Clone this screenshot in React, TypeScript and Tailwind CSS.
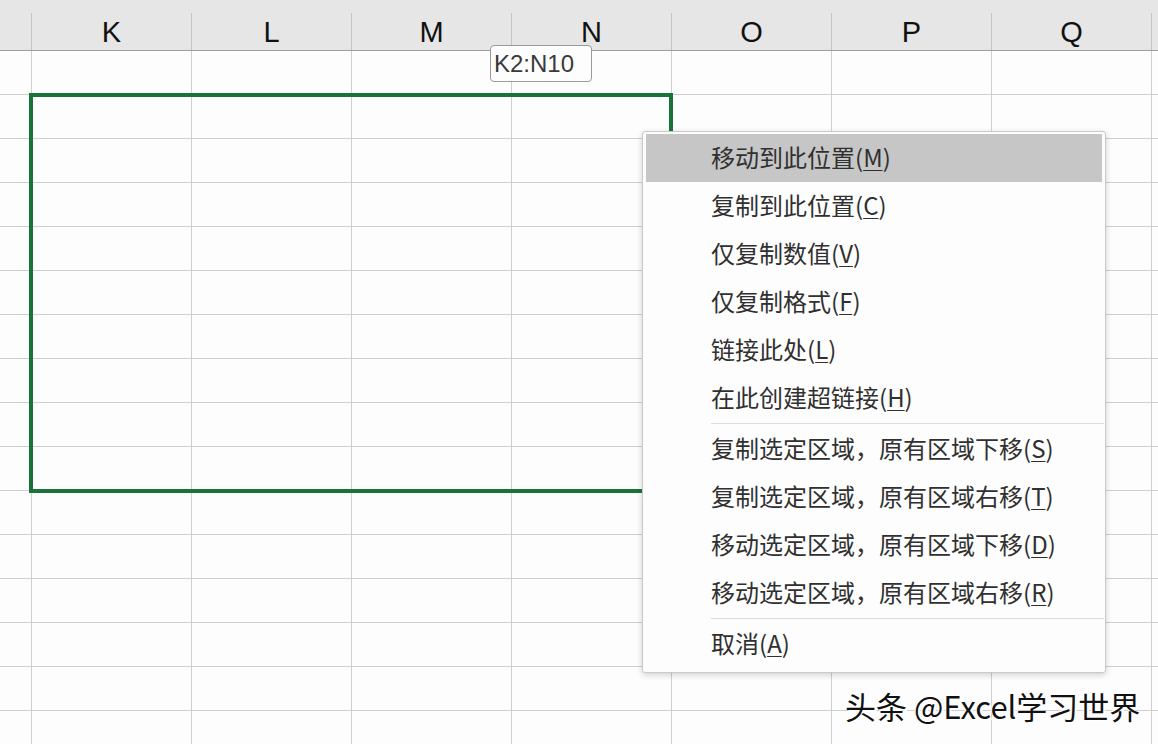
import React from "react";

const columns = ["K", "L", "M", "N", "O", "P", "Q", ""];
const rowCount = 16;

type MenuItem = { label: string; key: string; active?: boolean };

const menuGroups: MenuItem[][] = [
    [
        { label: "移动到此位置", key: "M", active: true },
        { label: "复制到此位置", key: "C" },
        { label: "仅复制数值", key: "V" },
        { label: "仅复制格式", key: "F" },
        { label: "链接此处", key: "L" },
        { label: "在此创建超链接", key: "H" },
    ],
    [
        { label: "复制选定区域，原有区域下移", key: "S" },
        { label: "复制选定区域，原有区域右移", key: "T" },
        { label: "移动选定区域，原有区域下移", key: "D" },
        { label: "移动选定区域，原有区域右移", key: "R" },
    ],
    [{ label: "取消", key: "A" }],
];

function HeaderRow() {
    return (
        <div className="flex h-[51px] shrink-0 bg-[#e6e6e6] border-b border-[#9e9e9e] pt-[13px]">
            <div className="w-[31px] shrink-0" />
            { columns.map((col, i) => (
                <div
                    key={ i }
                    className="w-[160px] shrink-0 border-l border-[#c4c4c4] flex items-center justify-center pt-[2px] text-[29px] leading-none text-[#111]"
                >
                    { col }
                </div>
            )) }
        </div>
    );
}

function BodyRow() {
    return (
        <div className="flex h-[44px] shrink-0 border-b border-[#cfcfcf]">
            <div className="w-[31px] shrink-0" />
            { columns.map((_, i) => (
                <div key={ i } className="w-[160px] shrink-0 border-l border-[#cfcfcf]" />
            )) }
        </div>
    );
}

function MenuRow({ item }: { item: MenuItem }) {
    return (
        <div
            className={ `h-[48px] flex items-center pl-[65px] pb-[3px] text-[24px] text-[#303030] ${item.active ? "bg-[#c6c6c6]" : ""}` }
        >
            <span>{ item.label }</span>
            <span>
                (<span className="underline underline-offset-[3px] decoration-1">{ item.key }</span>)
            </span>
        </div>
    );
}

function ContextMenu() {
    return (
        <div className="absolute left-[642px] top-[131px] w-[464px] h-[542px] bg-[#fdfdfd] border border-[#c9c9c9] rounded-[3px] shadow-[0_2px_6px_rgba(0,0,0,0.18)] px-[3px] pt-[2px] font-['Noto_Sans_CJK_SC',sans-serif]">
            { menuGroups.map((group, gi) => (
                <div key={ gi }>
                    { gi > 0 && (
                        <div className="h-[3px] flex items-center">
                            <div className="ml-[65px] mr-[-2px] flex-1 h-px bg-[#dcdcdc]" />
                        </div>
                    ) }
                    { group.map((item) => (
                        <MenuRow key={ item.key } item={ item } />
                    )) }
                </div>
            )) }
        </div>
    );
}

export default function App() {
    return (
        <div className="relative w-[1158px] h-[744px] overflow-hidden bg-[#fdfdfd] font-['Liberation_Sans','Noto_Sans_CJK_SC',sans-serif]">
            <div className="flex flex-col">
                <HeaderRow />
                { Array.from({ length: rowCount }).map((_, i) => (
                    <BodyRow key={ i } />
                )) }
            </div>

            {/* выделенный диапазон */ }
            <div className="absolute left-[29px] top-[93px] w-[644px] h-[400px] border-4 border-[#197338]" />

            {/* подсказка диапазона */ }
            <div className="absolute left-[490px] top-[45px] w-[102px] h-[37px] bg-[#fdfdfd] border border-[#9a9a9a] rounded-[4px] flex items-center pl-[3px] text-[24px] leading-none text-[#3a3a3a]">
                K2:N10
            </div>

            <ContextMenu />

            <div className="absolute left-[845px] top-[690px] text-[31px] leading-none text-[#111] font-['Noto_Sans_CJK_SC',sans-serif] [text-shadow:2px_2px_0_#fff,-1px_-1px_0_#fff]">
                头条 @Excel学习世界
            </div>
        </div>
    );
}
